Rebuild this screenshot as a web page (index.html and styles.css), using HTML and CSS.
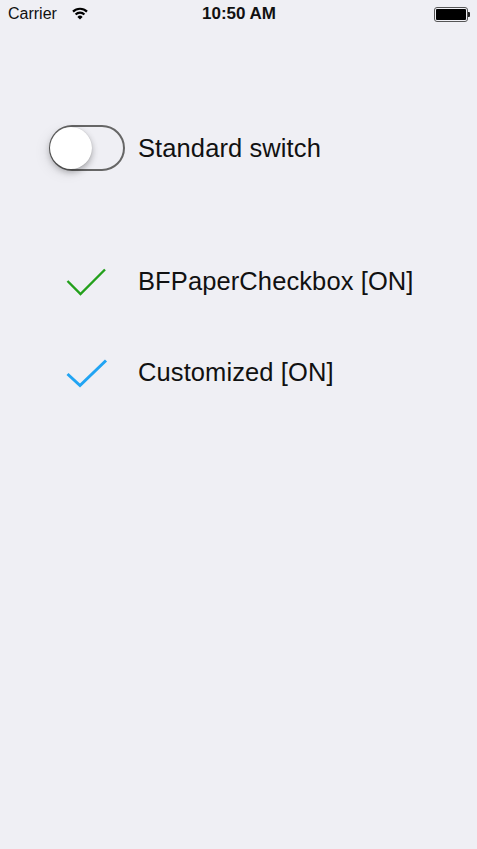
FILE: index.html
```html
<!DOCTYPE html>
<html>
<head>
<meta charset="utf-8">
<link rel="stylesheet" href="styles.css">
</head>
<body>
<div class="screen">
  <div class="statusbar">
    <div class="sb-left">
      <span class="carrier">Carrier</span>
      <svg class="wifi" width="16" height="13" viewBox="0 0 16 13">
        <path d="M1 4.6 A10 10 0 0 1 15 4.6" fill="none" stroke="#000" stroke-width="2.2"/>
        <path d="M3.6 7.4 A6.2 6.2 0 0 1 12.4 7.4" fill="none" stroke="#000" stroke-width="2.2"/>
        <path d="M8 12.6 L5.4 9.9 A3.6 3.6 0 0 1 10.6 9.9 Z" fill="#000"/>
      </svg>
    </div>
    <div class="time">10:50 AM</div>
    <div class="sb-right">
      <div class="battery"><div class="battery-fill"></div></div>
      <div class="battery-nub"></div>
    </div>
  </div>

  <div class="content">
    <div class="row switch-row">
      <div class="switch"><div class="knob"></div></div>
      <span class="label">Standard switch</span>
    </div>

    <div class="row check-row first">
      <div class="check-box">
        <svg width="44" height="34" viewBox="0 0 44 34">
          <polyline points="1.5,13 14.5,26 39,1.5" fill="none" stroke="#23a01b" stroke-width="2.4"/>
        </svg>
      </div>
      <span class="label">BFPaperCheckbox [ON]</span>
    </div>

    <div class="row check-row second">
      <div class="check-box">
        <svg width="44" height="34" viewBox="0 0 44 34">
          <polyline points="1.5,15 14,26.5 40,1.5" fill="none" stroke="#21a4f3" stroke-width="3"/>
        </svg>
      </div>
      <span class="label">Customized [ON]</span>
    </div>
  </div>
</div>
</body>
</html>
```

FILE: styles.css
```css
html, body {
  margin: 0;
  padding: 0;
  background: #efeff4;
}
.screen {
  width: 477px;
  height: 849px;
  background: #efeff4;
  font-family: "Liberation Sans", Arial, sans-serif;
  color: #111;
  overflow: hidden;
}
.statusbar {
  height: 28px;
  display: flex;
  align-items: center;
  justify-content: space-between;
  padding: 0 7px 0 8px;
  position: relative;
}
.sb-left {
  display: flex;
  align-items: center;
  gap: 15px;
}
.carrier {
  font-size: 16px;
  line-height: 28px;
}
.wifi {
  margin-top: -1px;
}
.time {
  position: absolute;
  left: 0;
  right: 0;
  text-align: center;
  font-size: 17px;
  font-weight: bold;
  line-height: 28px;
  padding-left: 1px;
}
.sb-right {
  display: flex;
  align-items: center;
}
.battery {
  width: 30px;
  height: 11px;
  border: 1.5px solid #555;
  border-radius: 3px;
  padding: 1px;
  box-sizing: content-box;
}
.battery-fill {
  width: 100%;
  height: 100%;
  background: #000;
  border-radius: 1px;
}
.battery-nub {
  width: 2px;
  height: 5px;
  background: #222;
  border-radius: 0 1px 1px 0;
}
.content {
  display: flex;
  flex-direction: column;
}
.row {
  display: flex;
  align-items: center;
}
.label {
  font-size: 25.5px;
  color: #111;
  letter-spacing: 0.1px;
}
.switch-row {
  margin-top: 97px;
  padding-left: 49px;
}
.switch {
  width: 72px;
  height: 42px;
  border: 2px solid #666;
  border-radius: 24px;
  position: relative;
  margin-right: 13px;
}
.knob {
  position: absolute;
  left: -1px;
  top: 0px;
  width: 42px;
  height: 42px;
  border-radius: 50%;
  background: #fff;
  box-shadow: 0 3px 6px rgba(0,0,0,0.28), 0 0 1px rgba(0,0,0,0.2), -4px 4px 14px rgba(0,0,0,0.08);
}
.check-row {
  padding-left: 66px;
}
.check-row.first {
  margin-top: 90px;
}
.check-row.second {
  margin-top: 51px;
}
.check-box {
  width: 72px;
  height: 40px;
  display: flex;
  align-items: center;
}
.check-box svg {
  margin-top: 7px;
}
```
